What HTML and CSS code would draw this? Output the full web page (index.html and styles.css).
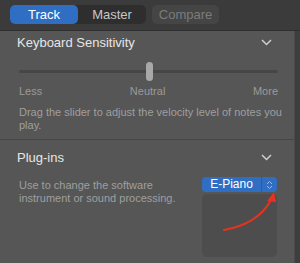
FILE: index.html
```html
<!DOCTYPE html>
<html lang="en">
<head>
  <meta charset="UTF-8" />
  <title>Track Inspector</title>
  <link rel="stylesheet" href="styles.css">
</head>
<body>
  <div class="toolbar">
    <div class="segmented">
      <div class="seg active">Track</div>
      <div class="seg">Master</div>
    </div>
    <div class="compare">Compare</div>
  </div>
  <div class="panel">
    <div class="content">
      <div class="section first">
        <div class="section-head">
          <span>Keyboard Sensitivity</span>
          <svg class="chevron" width="11" height="7" viewBox="0 0 11 7"><path d="M1 1 L5.5 5.5 L10 1" fill="none" stroke="#cfcfcf" stroke-width="1.5"/></svg>
        </div>
        <div class="slider">
          <div class="track"></div>
          <div class="thumb"></div>
        </div>
        <div class="scale">
          <span>Less</span><span>Neutral</span><span>More</span>
        </div>
        <p class="desc">Drag the slider to adjust the velocity level of notes you play.</p>
      </div>
      <div class="section">
        <div class="section-head">
          <span>Plug-ins</span>
          <svg class="chevron" width="11" height="7" viewBox="0 0 11 7"><path d="M1 1 L5.5 5.5 L10 1" fill="none" stroke="#cfcfcf" stroke-width="1.5"/></svg>
        </div>
        <div class="plugin-row">
          <p class="desc plugin-desc">Use to change the software instrument or sound processing.</p>
          <div class="plugin-col">
            <div class="popup">
              <span class="popup-label">E-Piano</span>
              <span class="stepper">
                <svg width="7" height="10" viewBox="0 0 7 10"><path d="M1 4 L3.5 1.5 L6 4 M1 6 L3.5 8.5 L6 6" fill="none" stroke="#9fbde6" stroke-width="1"/></svg>
              </span>
            </div>
            <div class="slot"></div>
          </div>
        </div>
      </div>
    </div>
    <div class="edge"></div>
  </div>
  <svg class="annotation" width="300" height="263" viewBox="0 0 300 263">
    <path d="M224 230 Q258 224 271 200" fill="none" stroke="#e8321f" stroke-width="2" stroke-linecap="round"/>
    <polygon points="274,192 267,201 276,202" fill="#e8321f"/>
  </svg>
</body>
</html>
```

FILE: styles.css
```css
body {
  margin: 0;
  width: 300px;
  height: 263px;
  overflow: hidden;
  background: #565656;
  font-family: "Liberation Sans", Arial, sans-serif;
  position: relative;
}
.toolbar {
  height: 31px;
  box-sizing: border-box;
  background: #3b3b3b;
  border-bottom: 1px solid #2f2f2f;
  display: flex;
  align-items: flex-start;
  gap: 6px;
  padding: 5px 10px 0;
}
.segmented {
  display: flex;
  width: 136px;
  height: 19px;
  background: #2e2e2e;
  border-radius: 5px;
}
.seg {
  flex: 1;
  text-align: center;
  font-size: 13px;
  line-height: 19px;
  color: #c8c8c8;
  border-radius: 5px;
}
.seg.active {
  background: #2f6ec2;
  color: #ffffff;
}
.compare {
  width: 67px;
  height: 19px;
  line-height: 19px;
  text-align: center;
  font-size: 13px;
  color: #7c7c7c;
  background: #454545;
  border-radius: 5px;
}
.panel {
  display: flex;
  height: 232px;
}
.content {
  flex: 1;
}
.edge {
  width: 5px;
  background: #3e3e3e;
  border-left: 1px solid #4a4a4a;
}
.section {
  padding: 0 11px 0 17px;
}
.section.first {
  padding-bottom: 7px;
  border-bottom: 1px solid #474747;
}
.section-head {
  display: flex;
  justify-content: space-between;
  align-items: center;
  height: 22px;
  font-size: 13px;
  color: #e6e6e6;
}
.section + .section .section-head {
  margin-top: 6px;
}
.chevron {
  margin-right: 11px;
}
.slider {
  position: relative;
  height: 19px;
  margin: 9px 0 0 2px;
  width: 259px;
}
.track {
  position: absolute;
  left: 0;
  right: 0;
  top: 8px;
  height: 3px;
  border-radius: 2px;
  background: #464646;
}
.thumb {
  position: absolute;
  left: 127px;
  top: 0;
  width: 7px;
  height: 19px;
  border-radius: 4px;
  background: #a8a8a8;
}
.scale {
  display: flex;
  justify-content: space-between;
  width: 259px;
  margin: 4px 0 0 2px;
  font-size: 11px;
  line-height: 13px;
  color: #9a9a9a;
}
.desc {
  margin: 8px 0 0 2px;
  font-size: 11px;
  line-height: 13px;
  color: #9f9f9f;
}
.plugin-row {
  display: flex;
  justify-content: space-between;
  margin-top: 9px;
}
.plugin-desc {
  margin-top: 2px;
  width: 160px;
  line-height: 12.5px;
}
.plugin-col {
  display: flex;
  flex-direction: column;
  gap: 2px;
  width: 75px;
  margin-right: 6px;
}
.popup {
  display: flex;
  height: 15px;
  background: #2f6ec2;
  border-radius: 4px;
  color: #ffffff;
  font-size: 12px;
  line-height: 15px;
}
.popup-label {
  flex: 1;
  text-align: center;
}
.stepper {
  width: 15px;
  display: flex;
  align-items: center;
  justify-content: center;
  border-left: 1px solid #285ea6;
}
.slot {
  height: 63px;
  background: #4d4d4d;
  border-radius: 5px;
}
.annotation {
  position: absolute;
  left: 0;
  top: 0;
}
```
